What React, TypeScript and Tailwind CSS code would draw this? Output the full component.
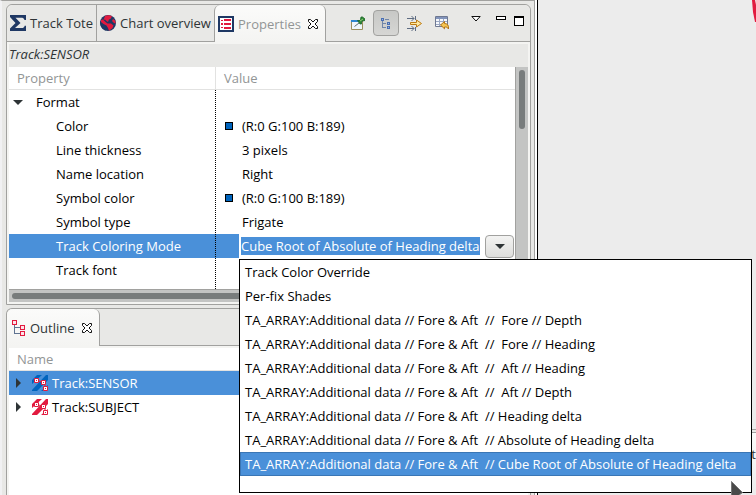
import type { ReactNode } from "react";

type Row = { name: string; value: string; swatch?: boolean };

const rows: Row[] = [
  { name: "Color", value: "(R:0 G:100 B:189)", swatch: true },
  { name: "Line thickness", value: "3 pixels" },
  { name: "Name location", value: "Right" },
  { name: "Symbol color", value: "(R:0 G:100 B:189)", swatch: true },
  { name: "Symbol type", value: "Frigate" },
];

const options = [
  "Track Color Override",
  "Per-fix Shades",
  "TA_ARRAY:Additional data // Fore & Aft  //  Fore // Depth",
  "TA_ARRAY:Additional data // Fore & Aft  //  Fore // Heading",
  "TA_ARRAY:Additional data // Fore & Aft  //  Aft // Heading",
  "TA_ARRAY:Additional data // Fore & Aft  //  Aft // Depth",
  "TA_ARRAY:Additional data // Fore & Aft  // Heading delta",
  "TA_ARRAY:Additional data // Fore & Aft  // Absolute of Heading delta",
  "TA_ARRAY:Additional data // Fore & Aft  // Cube Root of Absolute of Heading delta",
];

function SigmaIcon() {
  return (
    <svg width="16" height="16" viewBox="0 0 16 16" fill="#1f3864" aria-hidden="true">
      <path d="M0 0h16v5h-1.500C14 3.300 13 2.700 11 2.700H5.500L10.500 8 5 13h6.500c2 0 2.700-.7 3.200-2.300H16V16H0v-2.500L5.500 8 0 2z" />
    </svg>
  );
}

function GlobeIcon() {
  return (
    <svg width="16" height="16" viewBox="0 0 16 16" aria-hidden="true">
      <circle cx="8" cy="8" r="8" fill="#1f3864" />
      <path d="M5 1c2-1 5-1 7 .3L10.500 4 9 4.500 8 7 6.500 6 5 4.500 3.500 5z" fill="#e21a3f" />
      <path d="M.3 6L2 6.500 5 9 7 10.500 6.500 12 5 13 6 15.500C2.500 14.500-.5 11 .3 6z" fill="#1f3864" />
      <path d="M1 5l2-.5L5.500 7l2 1.500L11 8.500l2.500 2-1 2.500L9 15.800 8 13 6.500 10.500 3.500 9 1 7zM13 4l2 1.500.8 3L14 8l-2-2z" fill="#e21a3f" />
    </svg>
  );
}

function PropertiesIcon() {
  return (
    <svg width="16" height="16" viewBox="0 0 16 16" shapeRendering="crispEdges" aria-hidden="true">
      <path fill="#1f3864" d="M0 0h16v16H0z" />
      <path fill="#fff" d="M2 2h12v12H2z" />
      <path fill="#e21a3f" d="M3 4h2v1H3zM6 3h7v2H6zM3 7h2v2H3zM6 7h7v2H6zM3 11h2v1H3zM6 11h7v2H6z" />
    </svg>
  );
}

function CloseIcon() {
  return (
    <svg width="10" height="10" viewBox="0 0 10 10" fill="#fff" stroke="#111" aria-hidden="true">
      <path d="M.5.500h2L5 3 7.500.500h2v2L7 5l2.500 2.500v2h-2L5 7 2.500 9.500h-2v-2L3 5 .5 2.500z" />
    </svg>
  );
}

function PinIcon() {
  return (
    <svg width="14" height="14" viewBox="0 0 14 14" aria-hidden="true">
      <path d="M.5 4.500h11v9H.5z" fill="#eef6fb" stroke="#9a8f5c" />
      <path d="M0 4h8v2H0z" fill="#2f86cf" />
      <path d="M3.500 10.500L8 7" stroke="#5d6b70" />
      <path d="M6.500 4.500h2l1-1 .5-2.500h1.500L14 3v1.500l-2.500.5-1 1v2H9z" fill="#2f8a35" stroke="#1c6328" strokeWidth=".8" />
      <path d="M9 5l3-2" stroke="#8fca7c" />
    </svg>
  );
}

function TreeIcon() {
  return (
    <svg width="12" height="12" viewBox="0 0 12 12" fill="none" shapeRendering="crispEdges" aria-hidden="true">
      <path d="M2.500 3v7.500H6M2.500 6.500H6M5 2.500h4" stroke="#7186a8" />
      <path d="M1.500 1.500h2v2h-2zM7.500 5.500h2v2h-2zM7.500 9.500h2v2h-2z" stroke="#4a6fb3" fill="#9eb5dc" />
    </svg>
  );
}

function FilterIcon() {
  return (
    <svg width="16" height="15" viewBox="0 0 16 15" aria-hidden="true">
      <path d="M0 2.500h7M0 12.500h7M4.500 0l2.500 2.500L4.500 5M4.500 10L7 12.500 4.500 15" fill="none" stroke="#5e6c82" />
      <path d="M8.500 0v4M8.500 11v4" stroke="#5e6c82" />
      <path d="M3.500 6.500h6v-2.500l5 3.500-5 3.500V8.500h-6z" fill="#ffe9a0" stroke="#bd7b12" />
    </svg>
  );
}

function RestoreIcon() {
  return (
    <svg width="15" height="14" viewBox="0 0 15 14" aria-hidden="true">
      <path d="M.5.500h12v10H.5z" fill="#f6f8fc" stroke="#6e7891" />
      <path d="M1 1h11v2H1z" fill="#8294bb" />
      <path d="M1 5.500h11M1 8.500h11M4.500 3v7M8.500 3v7" stroke="#9ba8c3" />
      <path d="M5.500 9l4-3.500V7.500c3 0 4.500 2 4 5.500-1-1.700-2-2.200-4-2v1.800z" fill="#f4c452" stroke="#b37314" />
    </svg>
  );
}

function OutlineIcon() {
  return (
    <svg width="14" height="16" viewBox="0 0 14 16" fill="none" shapeRendering="crispEdges" aria-hidden="true">
      <path d="M2 5h1v8h5v1H2zM3 7h5v1H3z" fill="#5f7391" />
      <path d="M.5.500h4v4h-4zM8.500 5.500h4v4h-4zM8.500 11.500h4v4h-4z" stroke="#e21a3f" fill="#fde3e8" />
    </svg>
  );
}

function TrackIcon({ stripe }: { stripe: string }) {
  return (
    <svg width="16" height="16" viewBox="0 0 16 16" aria-hidden="true">
      <path fill={stripe} d="M5 0h5L0 9V5zM14 0h2v5L5 16H0v-1zM16 10v1l-4 5H9z" />
      <path d="M5 5.500l7 2M12 8l2 5" stroke="#e21a3f" />
      <path d="M2.500 3.500h4v4h-4zM9.500 5.500h4v4h-4zM11.500 11.500h4v4h-4z" fill="#fff" stroke="#e21a3f" />
      <path d="M4 5h1v1H4zM11 7h1v1h-1zM13 13h1v1h-1z" fill="#e21a3f" />
    </svg>
  );
}

function Expander({ open }: { open?: boolean }) {
  return open ? (
    <svg width="10" height="5" viewBox="0 0 10 5" fill="#2e3436" aria-hidden="true"><path d="M0 0h10L5 5z" /></svg>
  ) : (
    <svg width="5" height="10" viewBox="0 0 5 10" fill="#2e3436" aria-hidden="true"><path d="M0 0v10l5-5z" /></svg>
  );
}

function Tool({ label, className, children }: { label: string; className: string; children?: ReactNode }) {
  return (
    <button aria-label={label} className={"flex shrink-0 items-center justify-center " + className}>
      {children}
    </button>
  );
}

const edge = "border-[#a1a19f]";
// One-pixel dotted rule down the left side of each value cell.
const split = "bg-[linear-gradient(#000_50%,transparent_50%)] bg-[length:1px_2px] bg-repeat-y p-0 pl-px";

function PropertiesPanel() {
  return (
    <section className={"flex h-[301px] shrink-0 flex-col rounded-t-md border bg-[#f4f4f2] " + edge}>
      <header className="flex h-[37px] shrink-0 rounded-t-md bg-[#e8e8e6]">
        <button className={"flex w-[90px] shrink-0 items-center gap-1 border-r border-b pl-[3px] whitespace-nowrap " + edge}>
          <SigmaIcon /> Track Tote
        </button>
        <button className={"flex w-[117px] shrink-0 items-center gap-1 border-b pl-[3px] whitespace-nowrap " + edge}>
          <GlobeIcon /> Chart overview
        </button>
        <div className={"flex w-[112px] shrink-0 items-center gap-1 rounded-t-md border-x bg-linear-to-b from-[#fbfbfa] to-[#f4f4f2] pl-[3px] text-[#929595] " + edge}>
          <PropertiesIcon />
          <button>Properties</button>
          <button aria-label="Close Properties" className="ml-[3px]"><CloseIcon /></button>
        </div>
        <div className={"flex flex-1 items-center border-b pr-[6px] " + edge}>
          <div className="flex flex-1 items-center justify-end pr-[21px]">
            <Tool label="Pin to selection" className="mr-2 w-[14px]"><PinIcon /></Tool>
            <Tool label="Show categories" className="mr-2 h-[26px] w-[26px] rounded border border-[#a1a19f] bg-linear-to-b from-[#c7c8c6] to-[#d6d6d4]"><TreeIcon /></Tool>
            <Tool label="Show advanced properties" className="mr-3 w-4"><FilterIcon /></Tool>
            <Tool label="Restore default value" className="w-[15px]"><RestoreIcon /></Tool>
          </div>
          <div className="flex h-[14px] items-start">
            <Tool label="View menu" className="mr-[15px] w-[10px]">
              <svg width="10" height="6" viewBox="0 0 10 6" fill="#fff" stroke="#111"><path d="M.8.500h8.400L5 5z" /></svg>
            </Tool>
            <Tool label="Minimize" className="mr-2 h-1 w-[10px] border border-black bg-white" />
            <Tool label="Maximize" className="h-[10px] w-[10px] border border-t-2 border-black bg-white" />
          </div>
        </div>
      </header>
      <div className="m-[2px] flex min-h-0 flex-1 flex-col">
        <h2 className="h-[23px] shrink-0 bg-[#e8e8e6] leading-[20px] italic">Track:SENSOR</h2>
        <div className="flex min-h-0 flex-1 bg-white text-black">
          <div className="flex min-w-0 flex-1 flex-col">
            <table className="w-full flex-1 table-fixed border-separate border-spacing-0 text-left">
              <thead className="text-[#929595]">
                <tr className="h-[23px]">
                  <th className="w-[206px] border-b border-[#e2e2e1] p-0 pl-2 font-normal">Property</th>
                  <th className="border-b border-l border-[#e2e2e1] p-0 pl-2 font-normal">Value</th>
                </tr>
              </thead>
              <tbody>
                <tr className="h-6">
                  <td className="p-0 pl-1"><div className="flex items-center gap-[13px]"><Expander open />Format</div></td>
                  <td className={split} />
                </tr>
                {rows.map((r) => (
                  <tr key={r.name} className="h-6">
                    <td className="p-0 pl-[47px]">{r.name}</td>
                    <td className={split}>
                      <div className="flex items-center pl-[9px]">
                        <span className="mr-[9px] flex w-2">
                          {r.swatch && <span className="h-2 w-2 border border-black bg-[#0064bd]" />}
                        </span>
                        {r.value}
                      </div>
                    </td>
                  </tr>
                ))}
                <tr className="h-6 bg-[#4a90d9] text-white">
                  <td className="p-0 pl-[47px]"><label htmlFor="coloring">Track Coloring Mode</label></td>
                  <td className={split}>
                    <div className="ml-[23px] flex h-6 items-center bg-white pr-px pl-[2px]">
                      <input id="coloring" role="combobox" aria-expanded="true" aria-controls="modes" readOnly value="Cube Root of Absolute of Heading delta" className="h-[18px] w-[239px] min-w-0 bg-[#4a90d9] outline-none" />
                      <button aria-label="Open list" className="ml-auto flex h-[23px] w-[29px] shrink-0 items-center justify-center rounded border border-[#a1a19f] bg-linear-to-b from-[#f3f3f2] to-[#dededc]"><Expander open /></button>
                    </div>
                  </td>
                </tr>
                <tr className="h-6">
                  <td className="p-0 pl-[47px]">Track font</td>
                  <td className={split} />
                </tr>
                <tr>
                  <td className="p-0" />
                  <td className={split} />
                </tr>
              </tbody>
            </table>
            <div className={"h-[13px] shrink-0 border-t bg-[#c3c4c3] px-[3px] pt-[3px] " + edge}>
              <div className="h-[6px] rounded-full bg-[#787c7c]" />
            </div>
          </div>
          <div className={"w-[13px] shrink-0 border-l bg-[#c3c4c3] px-[3px] pt-[3px] " + edge}>
            <div className="h-[59px] rounded-full bg-[#787c7c]" />
          </div>
        </div>
      </div>
    </section>
  );
}

function OutlinePanel() {
  return (
    <section className={"flex flex-1 flex-col rounded-t-md border border-b-0 bg-[#f4f4f2] " + edge}>
      <header className="flex h-[37px] shrink-0 rounded-t-md bg-[#e8e8e6]">
        <div className={"flex w-[93px] items-center gap-1 rounded-t-md border-r bg-linear-to-b from-[#fbfbfa] to-[#f4f4f2] pl-[5px] " + edge}>
          <OutlineIcon />
          <button>Outline</button>
          <button aria-label="Close Outline" className="ml-[3px]"><CloseIcon /></button>
        </div>
        <div className={"flex-1 border-b " + edge} />
      </header>
      <div className="mx-[2px] mt-[2px] flex-1 bg-white text-black">
        <div className="h-[23px] border-b border-[#e2e2e1] pl-2 leading-[22px] text-[#929595]">Name</div>
        <ul role="tree">
          <li role="treeitem" aria-selected="true" className="flex h-6 items-center bg-[#4a90d9] pl-[7px] text-white">
            <Expander /><span className="mr-1 ml-[11px]"><TrackIcon stripe="#0064bd" /></span>Track:SENSOR
          </li>
          <li role="treeitem" aria-selected="false" className="flex h-6 items-center pl-[7px]">
            <Expander /><span className="mr-1 ml-[11px]"><TrackIcon stripe="#e21a3f" /></span>Track:SUBJECT
          </li>
        </ul>
      </div>
    </section>
  );
}

export default function App() {
  return (
    <main className="relative flex h-screen overflow-hidden bg-[#ececec] font-['Open_Sans','Noto_Sans',sans-serif] text-[13px] leading-[18px] text-[#2e3436]">
      <div className="flex w-[535px] shrink-0 flex-col gap-[3px] border-t border-r border-l-2 border-t-[#a1a19f] border-r-[#a1a19f] border-l-[#f1f1f3] bg-[#e8e8e6] pt-[3px] pr-[3px] pl-1">
        <PropertiesPanel />
        <OutlinePanel />
      </div>
      <div className="w-[3px] shrink-0 border-r border-black bg-white" />
      <div className="flex min-w-0 flex-1 flex-col">
        <div className="flex flex-1 justify-end">
          <svg width="4" height="22" viewBox="0 0 4 22" aria-hidden="true"><path d="M0 0h3l1 5v17H3L1 12z" fill="#e21a3f" /></svg>
        </div>
        <div className="h-1 border-y border-[#a1a19f] bg-[#e8e8e6]" />
        <div className="h-[62px] bg-linear-to-b from-[#fbfbfa] to-[#ececec] pt-3 text-right">t</div>
      </div>

      <ul id="modes" role="listbox" aria-label="Track Coloring Mode" className="absolute top-[259px] right-1 left-[239px] h-[234px] border border-black bg-white text-black">
        {options.map((o, i) => (
          <li
            key={o}
            role="option"
            aria-selected={i === 8}
            className={"flex h-6 items-center border px-1 whitespace-pre " + (i === 8 ? "border-[#3a76b5] bg-[#4a90d9] text-white" : "border-transparent")}
          >
            {o}
          </li>
        ))}
      </ul>
      <svg className="absolute top-[481px] left-[731px]" width="14" height="20" viewBox="0 0 14 20" aria-hidden="true">
        <path d="M.5.500v19L11.500 11.500z" fill="#4a4a4a" stroke="#777" />
      </svg>
    </main>
  );
}
